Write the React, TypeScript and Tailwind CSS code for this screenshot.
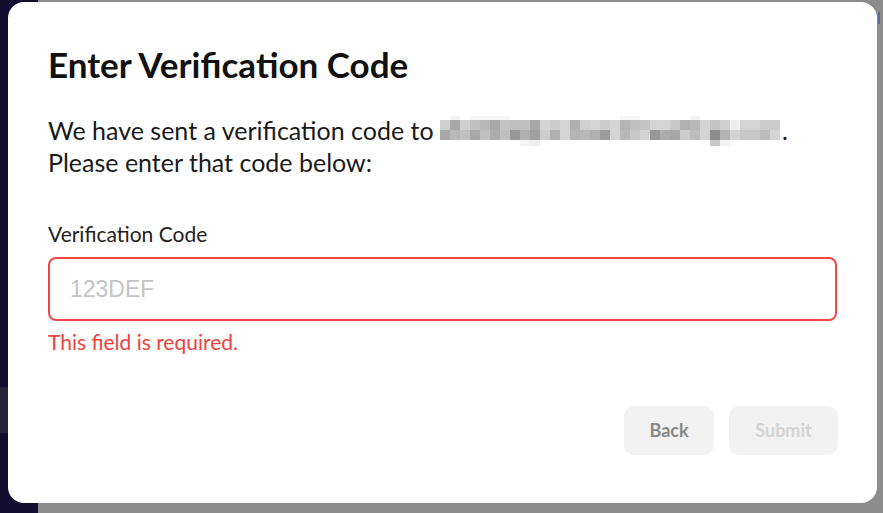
import React from "react";

const row1 = ["#d0d0d0","#a8a8a8","#d0d0d0","#c0c0c0","#b8b8b8","#a8a8a8","#c4c4c4","#c0c0c0","#c0c0c0","#a8a8a8","#d4d4d4","#cccccc","#d4d4d4","#b0b0b0","#d0d0d0","#d4d4d4","#cccccc","#d4d4d4","#b4b4b4","#c0c0c0","#c4c4c4","#d4d4d4","#d4d4d4","#c8c8c8","#b0b0b0","#b8b8b8","#d4d4d4","#c4c4c4","#d0d0d0","#eeeeee","#d4d4d4","#d4d4d4","#cccccc","#cccccc"];
const row2 = ["#a8a8a8","#b8b8b8","#c0c0c0","#a8a8a8","#c0c0c0","#acacac","#c0c0c0","#989898","#b0b0b0","#a0a0a0","#cccccc","#b0b0b0","#d4d4d4","#b4b4b4","#b8b8b8","#b0b0b0","#9c9c9c","#d4d4d4","#b8b8b8","#c8c8c8","#d4d4d4","#989898","#acacac","#a8a8a8","#cccccc","#bcbcbc","#d4d4d4","#8c8c8c","#b4b4b4","#d4d4d4","#c8c8c8","#c8c8c8","#bcbcbc","#d4d4d4"];

function Mosaic() {
  return (
    <svg width="342" height="32" viewBox="0 0 342 32" className="inline-block" style={{ verticalAlign: "-8px" }}>
      <rect x="10" y="0" width="10" height="4" fill="#f4f4f4" />
      <rect x="30" y="0" width="40" height="4" fill="#f6f6f6" />
      <rect x="180" y="0" width="20" height="4" fill="#f6f6f6" />
      <rect x="250" y="0" width="10" height="4" fill="#f4f4f4" />
      {row1.map((c, i) => (
        <rect key={"a" + i} x={i * 10} y={4} width={10} height={10} fill={c} />
      ))}
      {row2.map((c, i) => (
        <rect key={"b" + i} x={i * 10} y={14} width={10} height={10} fill={c} />
      ))}
      <rect x="80" y="24" width="10" height="6" fill="#f4f4f4" />
      <rect x="90" y="24" width="10" height="6" fill="#eeeeee" />
      <rect x="270" y="24" width="10" height="6" fill="#c8c8c8" />
      <rect x="280" y="24" width="10" height="6" fill="#f4f4f4" />
    </svg>
  );
}

export default function App() {
  return (
    <div className="relative w-[883px] h-[513px] overflow-hidden flex" style={{ fontFamily: "Lato, 'Noto Sans', sans-serif" }}>
      <div className="w-[38px] h-full bg-[#130d2f] flex flex-col">
        <div className="h-[387px]" />
        <div className="h-[46px] bg-[#272238]" />
      </div>
      <div className="flex-1 h-full bg-[#8c8c8c] relative">
        <div className="absolute right-[3px] top-[12px] w-[2px] h-[12px] bg-[#4f6f92]" />
      </div>

      <div className="absolute left-[8px] top-[2px] w-[869px] h-[501px] bg-white rounded-[16px] px-[40px] pt-[41px]">
        <h1 className="text-[35px] font-bold text-[#111111] leading-[42px]">Enter Verification Code</h1>
        <p className="mt-[31px] text-[25px] leading-[29px] text-[#1a1a1a]">
          We have sent a verification code to <Mosaic />.
          <br />
          Please enter that code below:
        </p>
        <div className="mt-[44px] text-[21px] leading-[26px] text-[#222222]">Verification Code</div>
        <div className="mt-[10px] w-[789px] h-[64px] border-2 border-[#f44848] rounded-[8px] flex items-center px-[20px]">
          <span className="text-[23px] text-[#c4c4c4]" style={{ fontFamily: "'Liberation Sans', Arial, sans-serif" }}>123DEF</span>
        </div>
        <div className="mt-[8px] text-[21px] leading-[26px] text-[#f04040]">This field is required.</div>
        <div className="mt-[51px] flex justify-end gap-[15px] w-[790px]">
          <button className="w-[90px] h-[49px] rounded-[10px] bg-[#f2f2f2] text-[18px] font-bold text-[#888888]">Back</button>
          <button className="w-[109px] h-[49px] rounded-[10px] bg-[#f2f2f2] text-[18px] font-bold text-[#d4d4d4]">Submit</button>
        </div>
      </div>
    </div>
  );
}
